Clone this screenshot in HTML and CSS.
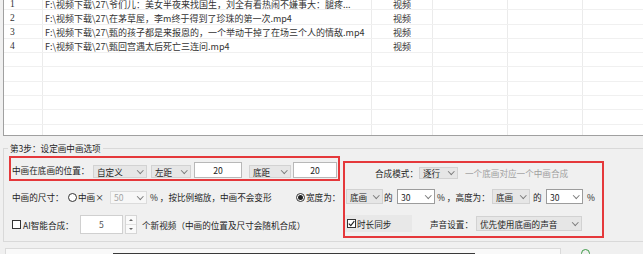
FILE: index.html
```html
<!DOCTYPE html>
<html lang="zh-CN">
<head>
    <meta charset="UTF-8">
    <title>画中画合成</title>
    <link rel="stylesheet" href="styles.css">
</head>
<body>
    <div class="list">
        <div class="rows">
            <div class="row"><div class="cell num">1</div><div class="cell path">F:\视频下载\27\爷们儿：美女半夜来找国生，刘全有看热闹不嫌事大：腿疼...</div><div class="cell type">视频</div><div class="cell extra"></div><div class="cell extra"></div><div class="cell extra"></div></div>
            <div class="row"><div class="cell num">2</div><div class="cell path">F:\视频下载\27\在茅草屋，李m终于得到了珍珠的第一次.mp4</div><div class="cell type">视频</div><div class="cell extra"></div><div class="cell extra"></div><div class="cell extra"></div></div>
            <div class="row"><div class="cell num">3</div><div class="cell path">F:\视频下载\27\甄的孩子都是来报恩的，一个举动干掉了在场三个人的情敌.mp4</div><div class="cell type">视频</div><div class="cell extra"></div><div class="cell extra"></div><div class="cell extra"></div></div>
            <div class="row"><div class="cell num">4</div><div class="cell path">F:\视频下载\27\甄回宫遇太后死亡三连问.mp4</div><div class="cell type">视频</div><div class="cell extra"></div><div class="cell extra"></div><div class="cell extra"></div></div>
            <div class="row"><div class="cell num"></div><div class="cell path"></div><div class="cell type"></div><div class="cell extra"></div><div class="cell extra"></div><div class="cell extra"></div></div>
            <div class="row"><div class="cell num"></div><div class="cell path"></div><div class="cell type"></div><div class="cell extra"></div><div class="cell extra"></div><div class="cell extra"></div></div>
            <div class="row"><div class="cell num"></div><div class="cell path"></div><div class="cell type"></div><div class="cell extra"></div><div class="cell extra"></div><div class="cell extra"></div></div>
            <div class="row"><div class="cell num"></div><div class="cell path"></div><div class="cell type"></div><div class="cell extra"></div><div class="cell extra"></div><div class="cell extra"></div></div>
            <div class="row"><div class="cell num"></div><div class="cell path"></div><div class="cell type"></div><div class="cell extra"></div><div class="cell extra"></div><div class="cell extra"></div></div>
            <div class="row"><div class="cell num"></div><div class="cell path"></div><div class="cell type"></div><div class="cell extra"></div><div class="cell extra"></div><div class="cell extra"></div></div>
        </div>
    </div>

    <div class="group">
        <div class="group-title">第3步：设定画中画选项</div>
        <div class="group-body">
            <div class="left-col">
                <div class="pos-box">
                    <span class="lbl lbl-pos">中画在底画的位置：</span>
                    <div class="dd dd-mode">自定义</div>
                    <div class="dd dd-left">左距</div>
                    <div class="box box-left">20</div>
                    <div class="dd dd-bottom">底距</div>
                    <div class="box box-bottom">20</div>
                </div>

                <div class="size-row">
                    <span class="lbl lbl-size">中画的尺寸：</span>
                    <span class="radio"></span>
                    <span class="lbl lbl-times">中画×</span>
                    <div class="dd off dd-scale">50</div>
                    <span class="lbl lbl-keep">%&nbsp;，按比例缩放，中画不会变形</span>
                    <span class="radio on radio-width"></span>
                    <span class="lbl lbl-width">宽度为：</span>
                </div>

                <div class="ai-row">
                    <span class="check"></span>
                    <span class="lbl lbl-ai">AI智能合成：</span>
                    <div class="spin-input">5</div>
                    <div class="spin-btns"><span class="up"></span><span class="down"></span></div>
                    <span class="lbl lbl-new">个新视频（中画的位置及尺寸会随机合成）</span>
                </div>
            </div>

            <div class="mix-box">
                <div class="mix-row">
                    <span class="lbl lbl-mode">合成模式：</span>
                    <div class="dd dd-row">逐行</div>
                    <span class="hint">一个底画对应一个中画合成</span>
                </div>
                <div class="mix-row mix-size">
                    <div class="dd dd-base">底画</div>
                    <span class="lbl lbl-of">的</span>
                    <div class="dd edit dd-pct">30</div>
                    <span class="lbl lbl-height">%&nbsp;，高度为：</span>
                    <div class="dd dd-base2">底画</div>
                    <span class="lbl lbl-of2">的</span>
                    <div class="dd edit dd-pct2">30</div>
                    <span class="lbl lbl-pc">%</span>
                </div>
                <div class="mix-row mix-sound">
                    <div class="sync">
                        <span class="check on">
                            <svg width="7" height="7" viewBox="0 0 7 7"><polyline points="0.8,3.6 2.8,5.6 6.3,1.2" fill="none" stroke="#222" stroke-width="1.1"/></svg>
                        </span>
                        <span>时长同步</span>
                    </div>
                    <span class="lbl lbl-sound">声音设置：</span>
                    <div class="dd dd-sound">优先使用底画的声音</div>
                </div>
            </div>
        </div>
    </div>

    <div class="footer">
        <div class="pane"><div class="bar"></div></div>
        <div class="dot"></div>
    </div>
</body>
</html>
```

FILE: styles.css
```css
* {
    box-sizing: border-box;
}
html, body {
    margin: 0;
}
body {
    width: 643px;
    height: 254px;
    overflow: hidden;
    background: #f0f0f0;
    font-family: "Noto Sans CJK SC", "Microsoft YaHei", sans-serif;
    font-size: 8.6px;
    color: #1e1e1e;
}

/* file list */
.list {
    height: 136px;
    margin-left: 3px;
    background: #fff;
    border-left: 1px solid #a0a0a0;
    border-bottom: 1px solid #a0a0a0;
    overflow: hidden;
}
.rows {
    margin-top: -4px;
}
.row {
    display: flex;
    height: 14.3px;
    border-bottom: 1px solid #f0f0f0;
}
.cell {
    flex-shrink: 0;
    padding-top: 1.5px;
    border-right: 1px solid #ebebeb;
    line-height: 13px;
    white-space: nowrap;
    overflow: hidden;
    font-size: 9px;
    color: #333;
}
.num {
    width: 39px;
    padding-left: 6px;
    font-family: "Liberation Serif", serif;
    font-size: 9.5px;
}
.path {
    width: 329px;
    padding-left: 2px;
}
.type {
    width: 61px;
    text-align: center;
}
.extra {
    width: 75px;
}

/* step 3 group */
.group {
    margin: 12px 0 0 3px;
    height: 94px;
    border-top: 1px solid #d9d9d9;
    border-left: 1px solid #d9d9d9;
    border-bottom: 1px solid #d9d9d9;
}
.group-title {
    width: max-content;
    margin: -7px 0 0 4px;
    padding: 0 2px;
    line-height: 12px;
    background: #f0f0f0;
}
.group-body {
    display: flex;
    align-items: flex-start;
}
.left-col {
    width: 334px;
    margin: 2px 0 0 5px;
}
.lbl {
    flex-shrink: 0;
    white-space: nowrap;
}

.pos-box {
    display: flex;
    align-items: flex-end;
    width: 331px;
    height: 25px;
    padding-bottom: 1px;
    border: 2px solid #e5383b;
}
.lbl-pos {
    width: 81px;
    margin-left: 1px;
    align-self: center;
    margin-top: 3px;
}

/* combo boxes */
.dd {
    display: flex;
    align-items: center;
    justify-content: space-between;
    flex-shrink: 0;
    height: 13px;
    padding: 0 4px 0 3px;
    background: #e6e6e6;
    border: 1px solid #d2d2d2;
    white-space: nowrap;
}
.dd::after {
    content: "";
    width: 3.5px;
    height: 3.5px;
    border-right: 1px solid #7d7d7d;
    border-bottom: 1px solid #7d7d7d;
    transform: rotate(45deg);
    margin-top: -2px;
}
.dd.edit {
    background: #fff;
    border-color: #9c9c9c;
}
.dd.off {
    background: #f7f7f7;
    border-color: #dcdcdc;
    color: #a5a5a5;
}
.box {
    flex-shrink: 0;
    height: 16px;
    line-height: 14px;
    text-align: center;
    background: #fff;
    border: 1px solid #b8b8b8;
}
.dd-mode { width: 54px; }
.dd-left { width: 40px; margin-left: 4px; }
.box-left { width: 48px; margin-left: 3px; }
.dd-bottom { width: 42px; margin-left: 7px; }
.box-bottom { width: 44px; margin-left: 2px; }

/* size row */
.size-row {
    display: flex;
    align-items: center;
    height: 20px;
    margin-top: 6px;
    padding-left: 3px;
}
.lbl-size { width: 56px; }
.radio {
    display: flex;
    align-items: center;
    justify-content: center;
    flex-shrink: 0;
    width: 9px;
    height: 9px;
    border: 1px solid #333;
    border-radius: 50%;
    background: #fff;
}
.radio.on::after {
    content: "";
    width: 5px;
    height: 5px;
    border-radius: 50%;
    background: #222;
}
.lbl-times { width: 27px; margin-left: 1px; }
.dd-scale { width: 37px; margin-left: 5px; }
.lbl-keep { width: 125px; margin-left: 3px; }
.radio-width { margin-left: 21px; }
.lbl-width { margin-left: 1px; }

/* ai row */
.ai-row {
    display: flex;
    align-items: center;
    height: 21px;
    margin-top: 7px;
    padding-left: 3px;
}
.check {
    display: flex;
    align-items: center;
    justify-content: center;
    flex-shrink: 0;
    width: 9px;
    height: 9px;
    border: 1px solid #333;
    background: #fff;
}
.lbl-ai { width: 57px; margin-left: 2px; }
.spin-input {
    width: 43px;
    height: 19px;
    line-height: 17px;
    text-align: center;
    color: #555;
    background: #fff;
    border: 1px solid #d0d0d0;
}
.spin-btns {
    display: flex;
    flex-direction: column;
    width: 12px;
    height: 19px;
    margin-left: 2px;
    background: #fafafa;
    border: 1px solid #d6d6d6;
}
.spin-btns span {
    flex: 1;
    display: flex;
    align-items: center;
    justify-content: center;
}
.spin-btns .up {
    border-bottom: 1px solid #e2e2e2;
}
.spin-btns .up::after {
    content: "";
    border: 2px solid transparent;
    border-bottom: 2.5px solid #666;
    margin-top: -2px;
}
.spin-btns .down::after {
    content: "";
    border: 2px solid transparent;
    border-top: 2.5px solid #666;
    margin-bottom: -2px;
}
.lbl-new { margin-left: 5px; }

/* mix settings */
.mix-box {
    width: 261px;
    margin-top: 7px;
    padding-bottom: 3px;
    border: 2px solid #e5383b;
}
.mix-row {
    display: flex;
    align-items: center;
    height: 19px;
}
.mix-size { margin-top: 5px; }
.mix-sound { margin-top: 8px; }
.lbl-mode { width: 44px; margin-left: 30px; }
.dd-row { width: 39px; height: 12px; }
.hint {
    margin-left: 7px;
    color: #a0a0a0;
    white-space: nowrap;
}
.dd-base { width: 37px; height: 15px; margin-left: 1px; }
.lbl-of { width: 12px; margin-left: 1px; }
.dd-pct { width: 38px; height: 15px; margin-left: 1px; }
.lbl-height { width: 55px; margin-left: 2px; }
.dd-base2 { width: 38px; height: 15px; }
.lbl-of2 { width: 12px; margin-left: 3px; }
.dd-pct2 { width: 37px; height: 15px; margin-left: 1px; }
.lbl-pc { margin-left: 4px; }

.sync {
    display: flex;
    align-items: center;
    gap: 1px;
    width: 67px;
    height: 17px;
    padding-left: 2px;
    background: #e8e8e8;
}
.lbl-sound { width: 46px; margin-left: 18px; }
.dd-sound { width: 106px; height: 15px; }

/* bottom strip */
.footer {
    display: flex;
    margin-top: 6px;
}
.pane {
    width: 556px;
    height: 12px;
    margin-left: 5px;
    background: #f9f9f9;
    border: 1px solid #dadada;
}
.bar {
    width: 362px;
    height: 3px;
    margin: 4px 0 0 107px;
    background: #3a3a3a;
}
.dot {
    width: 9px;
    height: 9px;
    margin: 1px 0 0 20px;
    border: 1.5px solid #3c9a46;
    border-radius: 50%;
}
```
